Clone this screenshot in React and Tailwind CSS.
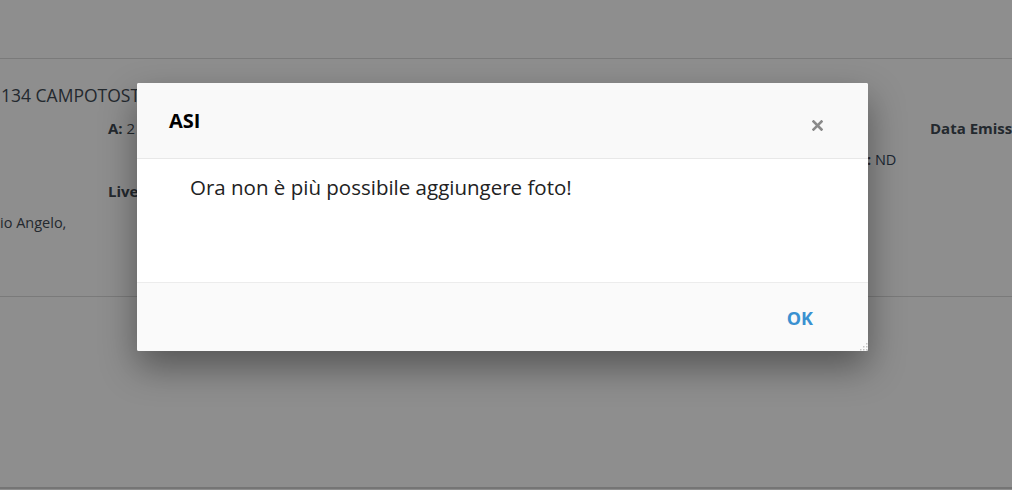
import React from 'react'

const font = { fontFamily: '"Open Sans", "Noto Sans", sans-serif' }

function PageBehind() {
    return (
        <div className="w-full h-full bg-white text-[#3f4a54]" style={font}>
            <div className="h-[58px]" />
            <div className="border-t border-[#dcdcdc] h-[238px]">
                <div className="h-[25px]" />
                <div className="text-[17.5px] leading-[23px] whitespace-nowrap pl-[1px]">134 CAMPOTOSTO</div>
                <div className="flex h-[32px] items-end text-[15px]">
                    <div className="pl-[108px] w-[930px] shrink-0">
                        <span className="font-bold">A:</span> 2
                    </div>
                    <div className="font-bold whitespace-nowrap">Data Emissione</div>
                </div>
                <div className="flex h-[32px] items-end text-[14.5px]">
                    <div className="pl-[867px] text-[#33475b]"><span className="font-bold text-[#3f4a54]">:</span> ND</div>
                </div>
                <div className="h-[31px] flex items-end pl-[108px] text-[15px] font-bold">Livello</div>
                <div className="h-[32px] flex items-end text-[14.5px]">io Angelo,</div>
            </div>
            <div className="border-t border-[#dcdcdc] h-[191px]" />
            <div className="border-t-2 border-[#d2d2d2]" />
        </div>
    )
}

export default function App() {
    return (
        <div className="relative w-[1012px] h-[490px] overflow-hidden">
            <PageBehind />
            <div className="absolute inset-0 bg-[rgba(0,0,0,0.443)]" />
            <div
                className="absolute left-[137px] top-[83px] w-[731px] h-[268px] flex flex-col bg-white rounded-[2px] shadow-[0_16px_36px_rgba(0,0,0,0.4)]"
                style={font}
            >
                <div className="h-[76px] bg-[#f9f9f9] border-b border-[#e8e8e8] flex items-center justify-between pl-[32px] pr-[45px] rounded-t-[2px]">
                    <h3 className="text-[20px] font-bold text-black">ASI</h3>
                    <button className="text-[#8a8a8a] mt-[9px]">
                        <svg width="11" height="11" viewBox="0 0 11 11">
                            <path d="M1.5 1.5 L9.5 9.5 M9.5 1.5 L1.5 9.5" stroke="currentColor" strokeWidth="2.6" strokeLinecap="square" />
                        </svg>
                    </button>
                </div>
                <div className="h-[124px] border-b border-[#ececec] pl-[53px] pt-[13px]">
                    <p className="text-[20.5px] text-[#222]">Ora non è più possibile aggiungere foto!</p>
                </div>
                <div className="flex-1 bg-[#fafafa] flex items-center justify-end pr-[55px] relative rounded-b-[2px]">
                    <button className="text-[18px] font-bold text-[#3a91d1] mt-[2px]">OK</button>
                    <svg className="absolute right-0 bottom-0" width="10" height="10" viewBox="0 0 10 10">
                        <g fill="#c4c4c4">
                            <rect x="8" y="2" width="1.5" height="1.5" />
                            <rect x="5" y="5" width="1.5" height="1.5" />
                            <rect x="8" y="5" width="1.5" height="1.5" />
                            <rect x="2" y="8" width="1.5" height="1.5" />
                            <rect x="5" y="8" width="1.5" height="1.5" />
                            <rect x="8" y="8" width="1.5" height="1.5" />
                        </g>
                    </svg>
                </div>
            </div>
        </div>
    )
}
